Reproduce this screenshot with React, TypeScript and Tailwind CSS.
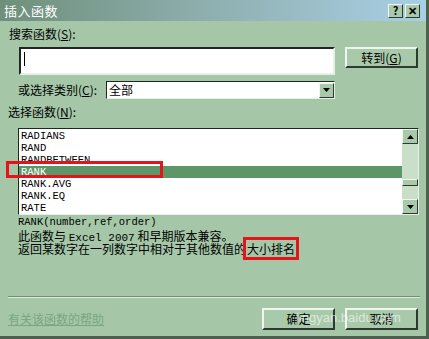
import React from "react";

const cjk = { fontFamily: '"Noto Sans CJK SC", "Noto Sans", sans-serif' };
const mono = { fontFamily: '"Liberation Mono", "Noto Sans CJK SC", monospace' };

function Raised({ className = "", children }: { className?: string; children?: React.ReactNode }) {
  return (
    <div
      className={
        "border border-t-[#eef6ee] border-l-[#eef6ee] border-r-[#2d3a2f] border-b-[#2d3a2f] bg-[#a8caaa] " +
        className
      }
    >
      {children}
    </div>
  );
}

export default function App() {
  const items = ["RADIANS", "RAND", "RANDBETWEEN", "RANK", "RANK.AVG", "RANK.EQ", "RATE"];
  return (
    <div
      className="relative w-[429px] h-[339px] bg-[#a5c7a8] overflow-hidden text-[12px] leading-[14px] text-black border-r-[3px] border-b-[3px] border-r-[#4d6050] border-b-[#4d6050]"
      style={cjk}
    >
      {/* Title bar */}
      <div className="h-[21px] flex items-center justify-between pl-[4px] pr-[6px] bg-gradient-to-r from-[#6f8f7b] via-[#8fb0b0] to-[#a9cfe6]">
        <span className="text-white text-[13px] tracking-[0.5px]">插入函数</span>
        <div className="flex gap-[2px]">
          <Raised className="w-[15px] h-[14px] flex items-center justify-center text-[11px] font-bold leading-none">?</Raised>
          <Raised className="w-[15px] h-[14px] flex items-center justify-center text-[11px] font-bold leading-none">✕</Raised>
        </div>
      </div>

      {/* Search label */}
      <div className="mt-[6px] ml-[9px] h-[15px]">搜索函数(<span className="underline">S</span>):</div>

      {/* Search row */}
      <div className="mt-[5px] flex items-start">
        <div className="ml-[19px] w-[316px] h-[28px] bg-white border-2 border-t-[#1e2820] border-l-[#1e2820] border-r-[#e6f0e6] border-b-[#e6f0e6] relative">
          <div className="absolute left-[3px] top-[3px] w-[1px] h-[14px] bg-black" />
        </div>
        <Raised className="ml-[10px] w-[73px] h-[21px] flex items-center justify-center border-2">
          转到(<span className="underline">G</span>)
        </Raised>
      </div>

      {/* Category row */}
      <div className="mt-[6px] flex items-center h-[18px]">
        <div className="ml-[18px] w-[88px]">或选择类别(<span className="underline">C</span>):</div>
        <div className="w-[229px] h-[18px] bg-white border border-t-[#1e2820] border-l-[#1e2820] border-r-[#e6f0e6] border-b-[#e6f0e6] flex items-center justify-between">
          <span className="ml-[2px]">全部</span>
          <Raised className="w-[15px] h-[15px] flex items-center justify-center">
            <svg width="7" height="4" viewBox="0 0 7 4"><path d="M0 0h7L3.5 4z" fill="#000" /></svg>
          </Raised>
        </div>
      </div>

      {/* Select function label */}
      <div className="mt-[6px] ml-[8px] h-[15px]">选择函数(<span className="underline">N</span>):</div>

      {/* List */}
      <div className="mt-[8px] ml-[18px] w-[401px] h-[87px] bg-white border border-t-[#1e2820] border-l-[#1e2820] border-r-[#e6f0e6] border-b-[#e6f0e6] flex">
        <div className="flex-1 pt-[1px]" style={mono}>
          {items.map((it) => (
            <div
              key={it}
              className={
                "h-[12px] leading-[12px] text-[10.5px] pl-[2px] " +
                (it === "RANK" ? "bg-[#5e9767] text-white" : "")
              }
            >
              {it}
            </div>
          ))}
        </div>
        <div className="w-[16px] bg-[#c9dfca] flex flex-col">
          <Raised className="w-[16px] h-[15px] flex items-center justify-center">
            <svg width="7" height="4" viewBox="0 0 7 4"><path d="M0 4h7L3.5 0z" fill="#000" /></svg>
          </Raised>
          <Raised className="mt-[35px] w-[16px] h-[7px]" />
          <Raised className="mt-auto w-[16px] h-[15px] flex items-center justify-center">
            <svg width="7" height="4" viewBox="0 0 7 4"><path d="M0 0h7L3.5 4z" fill="#000" /></svg>
          </Raised>
        </div>
      </div>

      {/* Syntax */}
      <div className="mt-[1px] ml-[18px] h-[13px] text-[10.5px] leading-[13px]" style={mono}>
        RANK(number,ref,order)
      </div>
      <div className="ml-[18px] text-[12px] leading-[13px]">
        <div className="h-[13px]">此函数与 <span style={mono} className="text-[11px] leading-[13px]">Excel 2007</span> 和早期版本兼容。</div>
        <div className="h-[13px]">
          返回某数字在一列数字中相对于其他数值的
          <span className="outline outline-[3px] outline-[#e4141a] bg-[#a5c7a8] px-[1px]">大小排名</span>
        </div>
      </div>

      {/* Separator */}
      <div className="absolute left-[8px] right-[6px] top-[296px] h-[2px] border-t border-t-[#6f8f74] border-b border-b-[#dcebdc]" />

      {/* Footer */}
      <div className="absolute left-0 right-0 top-[308px] flex items-center">
        <span className="ml-[8px] underline text-[#78a680] text-[12px]">有关该函数的帮助</span>
        <Raised className="ml-auto w-[73px] h-[22px] flex items-center justify-center border-2">确定</Raised>
        <Raised className="ml-[10px] mr-[8px] w-[73px] h-[22px] flex items-center justify-center border-2">取消</Raised>
      </div>
      <div className="absolute left-[296px] top-[311px] text-[13px] text-white/60" style={{ fontFamily: '"Liberation Sans", sans-serif' }}>
        jingyan.baidu.com
      </div>

      {/* Red highlight box around RANK row */}
      <div className="absolute left-[6px] top-[161px] w-[157px] h-[17px] border-[3px] border-[#e4141a]" />
    </div>
  );
}
